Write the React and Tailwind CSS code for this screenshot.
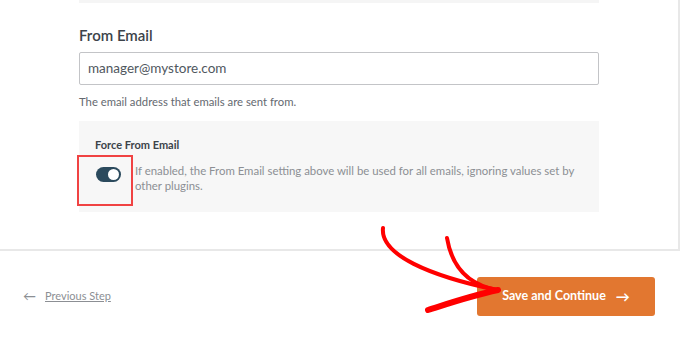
import React from 'react';

const font = { fontFamily: 'Lato, "Open Sans", sans-serif' };

export default function App() {
    return (
        <div className="relative w-[680px] h-[337px] overflow-hidden bg-white" style={font}>
            <div className="h-[251px] border-r-2 border-b-2 border-[#e8e8e8] pl-[79px]">
                <div className="w-[520px]">
                    <div className="h-[3px] bg-[#f5f5f5]" />
                    <div className="mt-[22px] text-[15px] leading-[20px] font-semibold text-[#3c434a]">From Email</div>
                    <div className="mt-[7px] h-[33px] border border-[#c3c4c7] rounded-[2px] flex items-center px-[8px] text-[13.5px] text-[#50575e]">
                        manager@mystore.com
                    </div>
                    <div className="mt-[10px] text-[11.3px] leading-[14px] text-[#646970]">The email address that emails are sent from.</div>
                    <div className="mt-[12px] h-[91px] bg-[#f7f7f7] relative">
                        <div className="pt-[17px] pl-[16px] text-[11px] leading-[14px] font-bold text-[#3c434a]">Force From Email</div>
                        <div className="flex mt-[11px]">
                            <div className="w-[56px] flex justify-center">
                                <div className="mt-[4px] ml-[3px] w-[25px] h-[15px] rounded-full bg-[#2b4a5d] flex items-center justify-end pr-[2px]">
                                    <div className="w-[11px] h-[11px] rounded-full bg-white" />
                                </div>
                            </div>
                            <div className="text-[11.4px] leading-[15px] text-[#8c8f94] w-[452px]">
                                If enabled, the From Email setting above will be used for all emails, ignoring values set by other plugins.
                            </div>
                        </div>
                        <div className="absolute left-[-2px] top-[34px] w-[56px] h-[51px] border-2 border-[#f04343]" />
                    </div>
                </div>
            </div>
            <div className="flex items-center justify-between pl-[23px] pr-[25px] pt-[26px]">
                <div className="flex items-center gap-[9px] text-[11px] text-[#8c8f94]">
                    <span className="text-[13px] leading-none">←</span>
                    <span className="underline">Previous Step</span>
                </div>
                <div className="w-[178px] h-[39px] rounded-[3px] bg-[#e27730] flex items-center justify-center gap-[10px] text-white text-[12.5px] font-bold">
                    <span>Save and Continue</span>
                    <span className="text-[14px] leading-none">→</span>
                </div>
            </div>
            <svg className="absolute left-0 top-0 pointer-events-none" width="680" height="337">
                <path d="M383 228 C 380 255, 430 276, 497 290" stroke="#ff0000" strokeWidth="4" fill="none" strokeLinecap="round" />
                <path d="M447 238 C 452 268, 470 285, 497 290" stroke="#ff0000" strokeWidth="4" fill="none" strokeLinecap="round" />
                <path d="M428 310 C 450 303, 470 296, 498 290" stroke="#ff0000" strokeWidth="6" fill="none" strokeLinecap="round" />
            </svg>
        </div>
    );
}
